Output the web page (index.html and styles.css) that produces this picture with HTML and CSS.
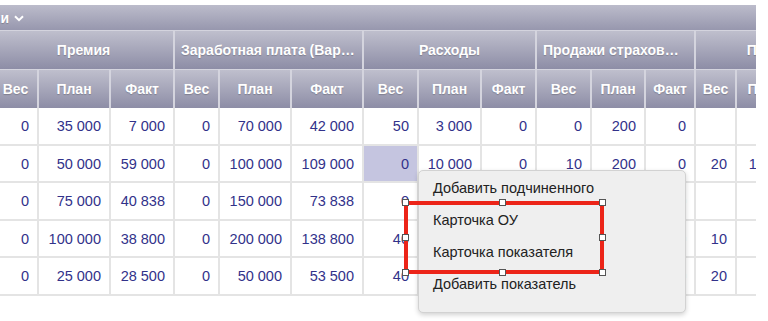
FILE: index.html
```html
<!DOCTYPE html>
<html lang="ru">
<head>
    <meta charset="UTF-8">
    <title>Показатели</title>
    <link rel="stylesheet" href="styles.css">
</head>
<body>
    <div class="page">
        <div class="grid-view">
            <div class="grid">
                <!-- top toolbar -->
                <div class="bar">
                    <span class="bar-title">Показатели</span>
                    <svg class="chevron" width="10" height="7" viewBox="0 0 10 7"><path d="M1 1.2 L5 5.2 L9 1.2" fill="none" stroke="#fff" stroke-width="2"/></svg>
                </div>

                <!-- group headers -->
                <div class="hd group">Премия</div>
                <div class="hd group">Заработная плата (Вариативная часть)</div>
                <div class="hd group">Расходы</div>
                <div class="hd group">Продажи страховых продуктов</div>
                <div class="hd group">Прочее</div>

                <!-- column headers -->
                <div class="hd">Вес</div><div class="hd">План</div><div class="hd">Факт</div>
                <div class="hd">Вес</div><div class="hd">План</div><div class="hd">Факт</div>
                <div class="hd">Вес</div><div class="hd">План</div><div class="hd">Факт</div>
                <div class="hd">Вес</div><div class="hd">План</div><div class="hd">Факт</div>
                <div class="hd">Вес</div><div class="hd">План</div><div class="hd">Факт</div>

                <!-- rows -->
                <div class="cell">0</div><div class="cell">35 000</div><div class="cell">7 000</div>
                <div class="cell">0</div><div class="cell">70 000</div><div class="cell">42 000</div>
                <div class="cell">50</div><div class="cell">3 000</div><div class="cell">0</div>
                <div class="cell">0</div><div class="cell">200</div><div class="cell">0</div>
                <div class="cell"></div><div class="cell"></div><div class="cell"></div>

                <div class="cell">0</div><div class="cell">50 000</div><div class="cell">59 000</div>
                <div class="cell">0</div><div class="cell">100 000</div><div class="cell">109 000</div>
                <div class="cell selected">0</div><div class="cell">10 000</div><div class="cell">0</div>
                <div class="cell">10</div><div class="cell">200</div><div class="cell">0</div>
                <div class="cell">20</div><div class="cell">1 000</div><div class="cell"></div>

                <div class="cell">0</div><div class="cell">75 000</div><div class="cell">40 838</div>
                <div class="cell">0</div><div class="cell">150 000</div><div class="cell">73 838</div>
                <div class="cell">0</div><div class="cell">5 000</div><div class="cell">0</div>
                <div class="cell">0</div><div class="cell">150</div><div class="cell">0</div>
                <div class="cell"></div><div class="cell"></div><div class="cell"></div>

                <div class="cell">0</div><div class="cell">100 000</div><div class="cell">38 800</div>
                <div class="cell">0</div><div class="cell">200 000</div><div class="cell">138 800</div>
                <div class="cell">40</div><div class="cell">4 000</div><div class="cell">0</div>
                <div class="cell">0</div><div class="cell">100</div><div class="cell">0</div>
                <div class="cell">10</div><div class="cell"></div><div class="cell"></div>

                <div class="cell">0</div><div class="cell">25 000</div><div class="cell">28 500</div>
                <div class="cell">0</div><div class="cell">50 000</div><div class="cell">53 500</div>
                <div class="cell">40</div><div class="cell">2 000</div><div class="cell">0</div>
                <div class="cell">0</div><div class="cell">120</div><div class="cell">0</div>
                <div class="cell">20</div><div class="cell"></div><div class="cell"></div>
            </div>
        </div>

        <!-- context menu -->
        <ul class="context-menu">
            <li>Добавить подчиненного</li>
            <li>Карточка ОУ</li>
            <li>Карточка показателя</li>
            <li>Добавить показатель</li>
        </ul>

        <!-- annotation frame -->
        <div class="frame">
            <span class="handle tl"></span><span class="handle tm"></span><span class="handle tr"></span>
            <span class="handle ml"></span><span class="handle mr"></span>
            <span class="handle bl"></span><span class="handle bm"></span><span class="handle br"></span>
        </div>
    </div>
</body>
</html>
```

FILE: styles.css
```css
/* General styles */
body {
    margin: 0;
    background-color: #ffffff;
    font-family: "Liberation Sans", Arial, sans-serif;
}

.page {
    position: relative;
    padding-top: 5px;
    height: 316px;
}

.grid-view {
    width: 756px;
    overflow: hidden; /* grid is scrolled horizontally */
}

.grid {
    display: grid;
    grid-template-columns: 45px 72px 64px 45px 72px 72px 55px 63px 55px 55px 54px 50px 41px 58px 55px;
    grid-template-rows: 25px 39px 39px 38px 37px 38px 37px 38px;
    width: 856px;
    margin-left: -6px;
}

/* Header bar */
.bar {
    grid-column: 1 / -1;
    display: flex;
    align-items: center;
    gap: 5px;
    padding-left: 6px;
    color: #ffffff;
    font-weight: bold;
    font-size: 14px;
    background: linear-gradient(#bcbccb, #9797ae);
    text-shadow: 0 1px 1px rgba(0, 0, 0, 0.2);
}

.bar-title {
    display: inline-block;
    width: 9px;
    overflow: hidden;
    white-space: nowrap;
    direction: rtl;
}

.chevron {
    margin-top: 1px;
}

.hd {
    display: flex;
    align-items: center;
    justify-content: center;
    box-sizing: border-box;
    border-top: 1px solid #d4d4de;
    border-right: 2px solid #d4d4de;
    background: linear-gradient(#bfbfcd, #8d8da6);
    color: #ffffff;
    font-weight: bold;
    font-size: 14px;
    text-shadow: 0 1px 1px rgba(0, 0, 0, 0.2);
    white-space: nowrap;
}

.hd.group {
    grid-column: span 3;
    display: block;
    padding: 0 6px;
    line-height: 38px;
    text-align: center;
    overflow: hidden;
    text-overflow: ellipsis;
}

/* Data cells */
.cell {
    box-sizing: border-box;
    padding-right: 8px;
    border-right: 2px solid #e4e4e4;
    border-bottom: 2px solid #e4e4e4;
    color: #32328a;
    font-size: 14.5px;
    text-align: right;
    display: flex;
    align-items: center;
    justify-content: flex-end;
}

.cell.selected {
    background-color: #c5c5e0;
}

/* Context menu */
.context-menu {
    position: absolute;
    left: 418px;
    top: 170px;
    width: 268px;
    height: 143px;
    box-sizing: border-box;
    margin: 0;
    padding: 1px 0 0 0;
    list-style-type: none;
    background-color: #efefef;
    border: 1px solid #d2d2d2;
    border-radius: 5px;
    box-shadow: 0 2px 5px rgba(0, 0, 0, 0.18);
}

.context-menu li {
    height: 32px;
    line-height: 32px;
    padding-left: 14px;
    color: #222222;
    font-size: 14.5px;
}

/* Red frame drawn over the menu */
.frame {
    position: absolute;
    left: 404px;
    top: 201px;
    width: 200px;
    height: 73px;
    box-sizing: border-box;
    border: 4px solid #ec2418;
}

.handle {
    position: absolute;
    width: 7px;
    height: 7px;
    box-sizing: border-box;
    background-color: #ffffff;
    border: 1px solid #555555;
}

.tl { left: -6px; top: -6px; }
.tm { left: 91px; top: -6px; }
.tr { right: -6px; top: -6px; }
.ml { left: -6px; top: 29px; }
.mr { right: -6px; top: 29px; }
.bl { left: -6px; bottom: -6px; }
.bm { left: 91px; bottom: -6px; }
.br { right: -6px; bottom: -6px; }
```
